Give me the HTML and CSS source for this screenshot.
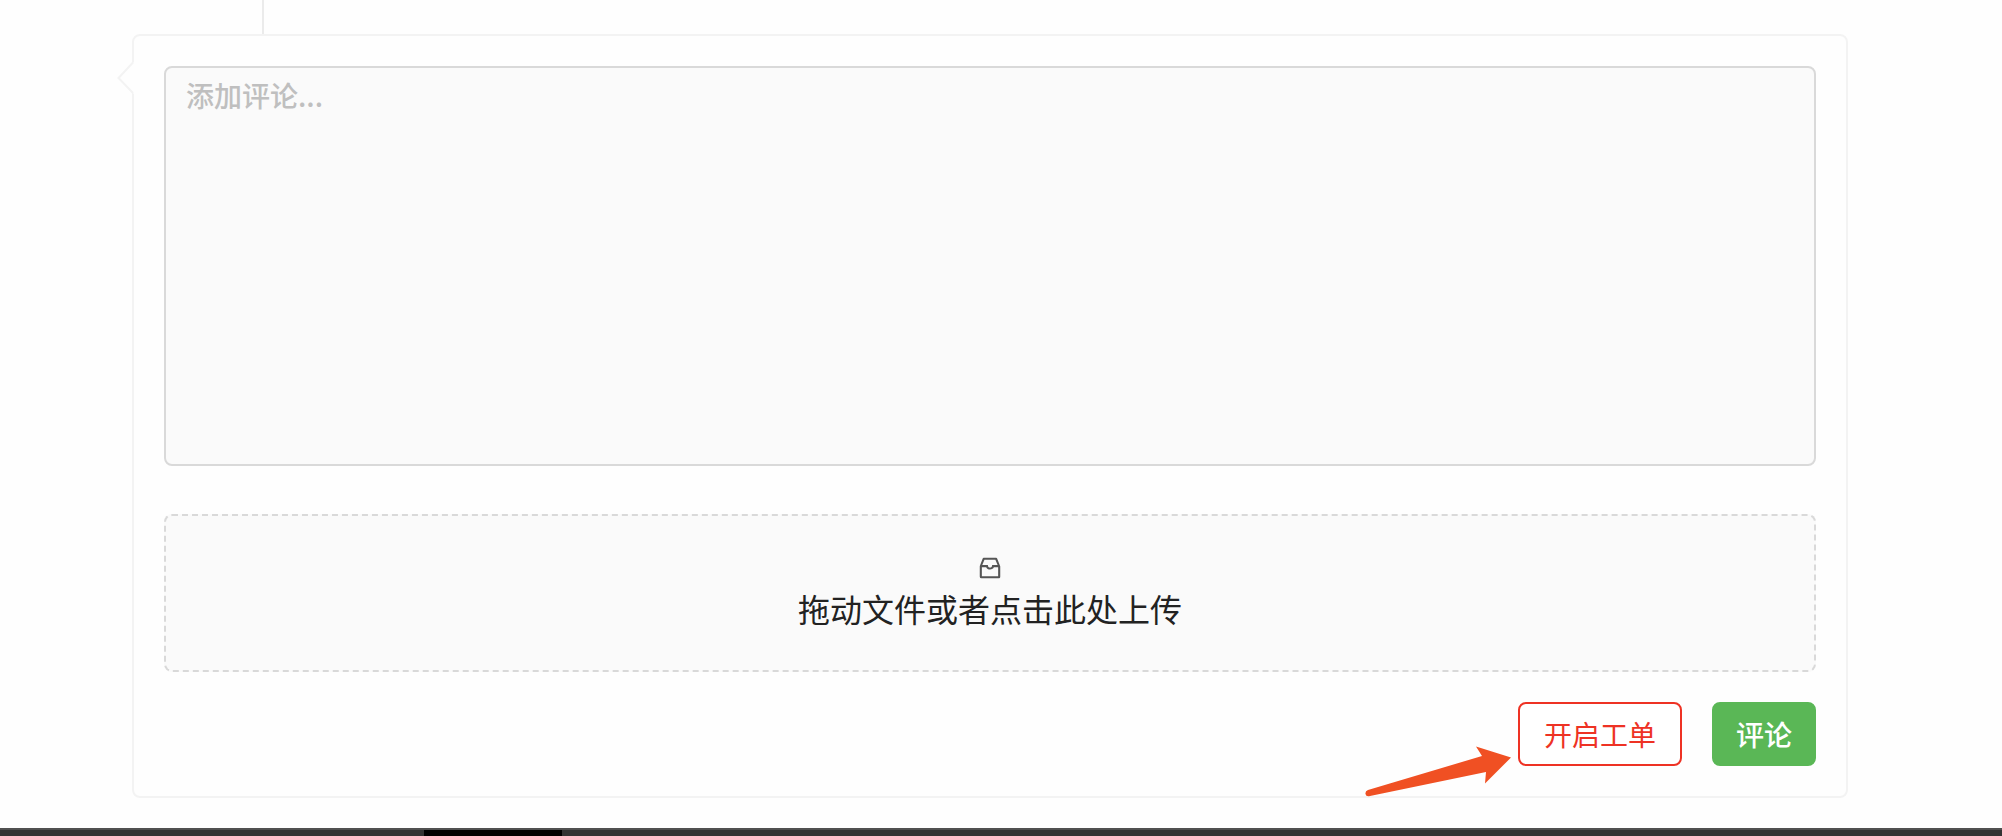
FILE: index.html
```html
<!DOCTYPE html>
<html lang="zh-CN">
<head>
<meta charset="utf-8">
<title>添加评论</title>
<link rel="stylesheet" href="styles.css">
</head>
<body>
<main class="page">
  <div class="timeline"></div>
  <form class="card">
    <svg class="card-notch" width="17" height="34" viewBox="0 0 17 34" aria-hidden="true">
      <path class="notch-fill" d="M17 1L1.500 17L17 33Z"/>
      <path class="notch-line" d="M16 1.500L1.500 17L16 32"/>
    </svg>
    <textarea class="comment" aria-label="添加评论" placeholder="添加评论..."></textarea>
    <button type="button" class="dropzone">
      <svg class="inbox" viewBox="0 0 1024 1024" aria-hidden="true"><path d="M885.2 446.3l-.2-.8-112.2-285.1c-5-16.1-19.9-27.2-36.8-27.2H281.200c-17 0-32.1 11.3-36.9 27.600L139.400 443l-.3.7-.2.8c-1.3 4.900-1.7 9.900-1 14.800-.1 1.600-.2 3.200-.2 4.800V830a60.900 60.900 0 0 0 60.800 60.800h627.200c33.500 0 60.800-27.300 60.900-60.800V464.100c0-1.300 0-2.600-.1-3.700.4-4.900 0-9.600-1.300-14.100zm-295.800-43l-.3 15.700c-.8 44.900-31.800 75.100-77.100 75.100-22.100 0-41.100-7.100-54.800-20.600S436 441.200 435.600 419l-.3-15.700H229.500L309 210h399.200l81.700 193.300H589.400zm-375 76.800h157.300c24.300 57.100 76 90.800 140.400 90.800 33.700 0 65-9.400 90.300-27.200 22.200-15.600 39.500-37.400 50.700-63.600h156.500V814H214.400V480.100z"/></svg>
      <span>拖动文件或者点击此处上传</span>
    </button>
    <div class="actions">
      <button type="button" class="btn btn-danger">开启工单
        <svg class="pointer" width="146" height="52" viewBox="0 0 146 52" aria-hidden="true"><path d="M0.500 48Q0 45 3 44L117 10L111 0.500L146 11.500L120 37.500L121 26L5 50Q1 51 0.500 48Z"/></svg>
      </button>
      <button type="submit" class="btn btn-success">评论</button>
    </div>
  </form>
  <footer class="bar"><div class="bar-tab"></div></footer>
</main>
</body>
</html>
```

FILE: styles.css
```css
* {
  box-sizing: border-box;
}

body {
  margin: 0;
  background: #fefefe;
  font-family: "Noto Sans CJK SC", sans-serif;
}

button,
textarea {
  font-family: inherit;
}

.page {
  display: flex;
  flex-direction: column;
  min-height: 100vh;
}

.timeline {
  width: 2px;
  height: 34px;
  margin-left: 262px;
  background: #ebebeb;
}

.card {
  position: relative;
  display: flex;
  flex-direction: column;
  margin: 0 154px 30px 132px;
  padding: 30px;
  border: 2px solid #f3f3f3;
  border-radius: 8px;
}

.card-notch {
  position: absolute;
  top: 25px;
  left: -17px;
}

.notch-fill {
  fill: #fefefe;
}

.notch-line {
  fill: none;
  stroke: #f3f3f3;
  stroke-width: 2;
}

.comment {
  height: 400px;
  padding: 6px 20px;
  border: 2px solid #d9d9d9;
  border-radius: 8px;
  background: #fafafa;
  color: #222;
  font-size: 28px;
  font-weight: 500;
  line-height: 42px;
  resize: none;
}

.comment::placeholder {
  color: #bfbfbf;
  opacity: 1;
}

.dropzone {
  display: flex;
  flex-direction: column;
  align-items: center;
  margin-top: 48px;
  padding: 38px 20px 36px;
  border: 2px dashed #d9d9d9;
  border-radius: 8px;
  background: #fafafa;
  color: #222;
  font-size: 32px;
  line-height: 52px;
}

.inbox {
  width: 28px;
  height: 28px;
  fill: #555;
}

.actions {
  display: flex;
  justify-content: flex-end;
  gap: 30px;
  margin-top: 30px;
}

.btn {
  position: relative;
  height: 64px;
  padding: 0 22px;
  border: 2px solid;
  border-radius: 8px;
  font-size: 28px;
  line-height: 40px;
}

.btn-danger {
  padding: 0 24px;
  border-color: #ee3224;
  background: #fff;
  color: #ee3224;
}

.btn-success {
  border-color: #5ab756;
  background: #5ab756;
  color: #fff;
  font-weight: 500;
}

.pointer {
  position: absolute;
  right: 169px;
  bottom: -34px;
  fill: #f05023;
}

.bar {
  display: flex;
  flex: 1;
  padding-left: 424px;
  border-top: 2px solid #505050;
  background: #333;
}

.bar-tab {
  width: 138px;
  background: #000;
}
```
